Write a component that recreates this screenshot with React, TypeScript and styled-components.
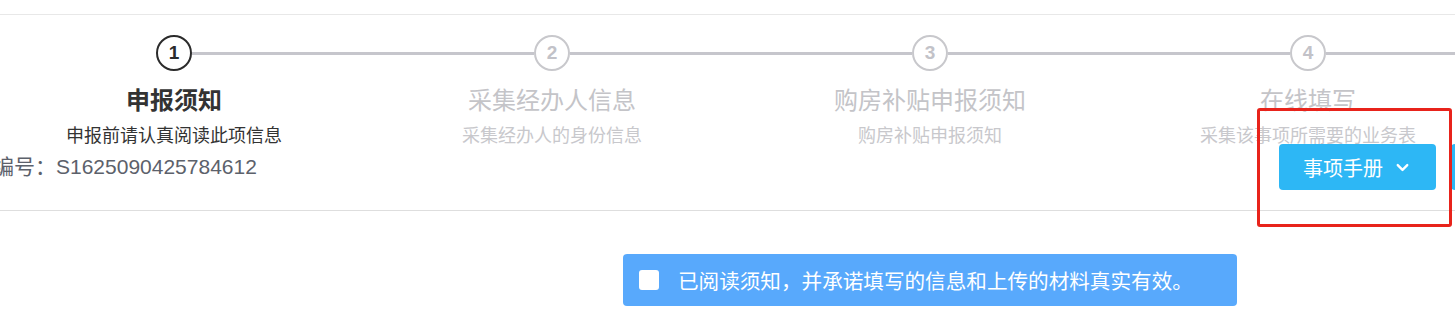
import styled, { createGlobalStyle } from "styled-components";
import { ChevronDown } from "lucide-react";

const GlobalStyle = createGlobalStyle`
  html, body {
    margin: 0;
    padding: 0;
    background: #fff;
    overflow: hidden;
  }
  body {
    font-family: "Liberation Sans", "Noto Sans CJK SC", sans-serif;
  }
`;

const steps = [
  { title: "申报须知", desc: "申报前请认真阅读此项信息" },
  { title: "采集经办人信息", desc: "采集经办人的身份信息" },
  { title: "购房补贴申报须知", desc: "购房补贴申报须知" },
  { title: "在线填写", desc: "采集该事项所需要的业务表" },
];

const Page = styled.div`
  position: relative;
  width: 1455px;
  height: 335px;
  overflow: hidden;
  padding-top: 14px;
  box-sizing: border-box;
`;

const Panel = styled.section`
  border-top: 1px solid #e8e8e8;
  border-bottom: 1px solid #dedede;
  padding: 20px 0 20px;
`;

const StepsRow = styled.div`
  display: flex;
  margin-left: -15px;
`;

const Step = styled.div`
  flex: 0 0 378px;
  display: flex;
  flex-direction: column;
  align-items: center;
`;

const StepHead = styled.div`
  display: flex;
  align-items: center;
  width: 100%;
`;

const Line = styled.div<{ $hidden?: boolean }>`
  flex: 1;
  height: 3px;
  background: ${(p) => (p.$hidden ? "transparent" : "#c6c6cc")};
`;

const Circle = styled.div<{ $active?: boolean }>`
  width: 36px;
  height: 36px;
  box-sizing: border-box;
  border-radius: 50%;
  border: 2.5px solid ${(p) => (p.$active ? "#2b2b2b" : "#c8c8cc")};
  color: ${(p) => (p.$active ? "#2b2b2b" : "#c2c2c8")};
  display: flex;
  align-items: center;
  justify-content: center;
  font-size: 19px;
  font-weight: bold;
`;

const StepTitle = styled.div<{ $active?: boolean }>`
  margin-top: 14px;
  font-size: 24px;
  line-height: 32px;
  font-weight: ${(p) => (p.$active ? 700 : 400)};
  color: ${(p) => (p.$active ? "#333" : "#c4c4c8")};
  white-space: nowrap;
`;

const StepDesc = styled.div<{ $active?: boolean }>`
  margin-top: 7px;
  font-size: 18px;
  line-height: 24px;
  color: ${(p) => (p.$active ? "#333" : "#c8c8cc")};
  white-space: nowrap;
`;

const InfoRow = styled.div`
  display: flex;
  align-items: center;
  justify-content: space-between;
  margin-top: -4px;
`;

const Serial = styled.div`
  margin-left: -7px;
  margin-top: -4px;
  font-size: 21px;
  color: #5c616b;
  white-space: nowrap;
`;

const Actions = styled.div`
  display: flex;
  gap: 15px;
  margin-right: -153px;
`;

const ActionButton = styled.button`
  display: flex;
  align-items: center;
  justify-content: center;
  gap: 10px;
  width: 157px;
  height: 46px;
  border: none;
  border-radius: 4px;
  background: #2db7f5;
  color: #fff;
  font-family: inherit;
  font-size: 20px;
  padding: 0;
  cursor: pointer;
`;

const AgreeBar = styled.label`
  display: flex;
  align-items: center;
  gap: 19px;
  width: 614px;
  height: 52px;
  box-sizing: border-box;
  margin: 43px 0 0 623px;
  padding-left: 16px;
  border-radius: 4px;
  background: #58a9fc;
  color: #fff;
  font-size: 20.6px;
  white-space: nowrap;
`;

const Box = styled.span`
  width: 20px;
  height: 20px;
  border-radius: 3px;
  background: #fff;
  flex-shrink: 0;
`;

const Highlight = styled.div`
  position: absolute;
  left: 1257px;
  top: 108px;
  width: 195px;
  height: 119px;
  box-sizing: border-box;
  border: 3px solid #e8231b;
  border-radius: 3px;
  pointer-events: none;
`;

export default function App() {
  return (
    <Page>
      <GlobalStyle />
      <Panel>
        <StepsRow>
          {steps.map((s, i) => (
            <Step key={s.title}>
              <StepHead>
                <Line $hidden={i === 0} />
                <Circle $active={i === 0}>{i + 1}</Circle>
                <Line />
              </StepHead>
              <StepTitle $active={i === 0}>{s.title}</StepTitle>
              <StepDesc $active={i === 0}>{s.desc}</StepDesc>
            </Step>
          ))}
        </StepsRow>
        <InfoRow>
          <Serial>编号：S1625090425784612</Serial>
          <Actions>
            <ActionButton>
              事项手册
              <ChevronDown size={19} strokeWidth={3} />
            </ActionButton>
            <ActionButton>办事指南</ActionButton>
          </Actions>
        </InfoRow>
      </Panel>
      <AgreeBar>
        <Box />
        已阅读须知，并承诺填写的信息和上传的材料真实有效。
      </AgreeBar>
      <Highlight />
    </Page>
  );
}
